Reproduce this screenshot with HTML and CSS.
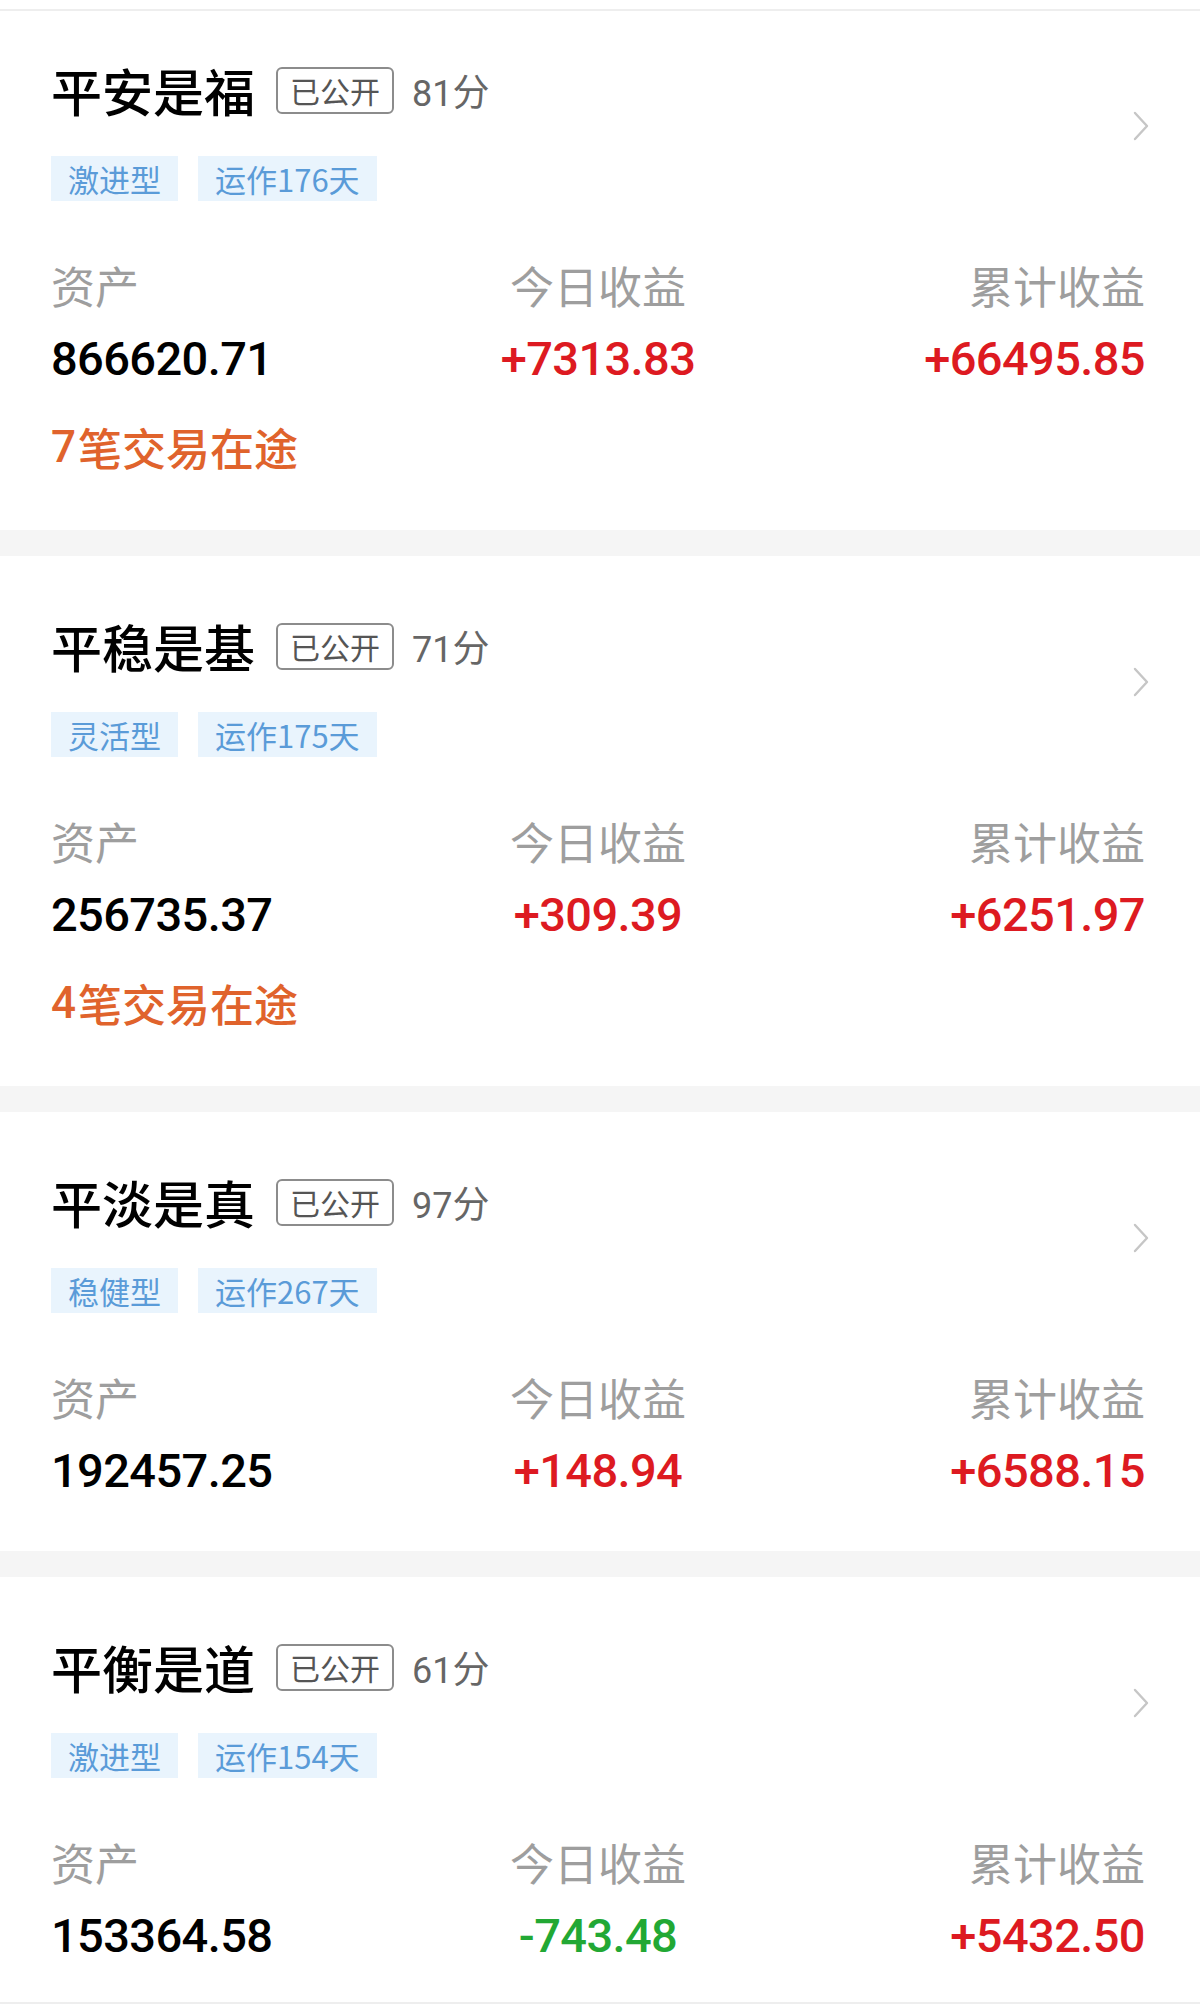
FILE: index.html
```html
<!DOCTYPE html>
<html lang="zh-CN">
<head>
    <meta charset="UTF-8">
    <meta name="viewport" content="width=device-width, initial-scale=1.0">
    <title>组合列表</title>
    <link rel="stylesheet" href="styles.css">
</head>
<body>
    <div class="divider"></div>
    <div class="list">
        <div class="card card-first">
            <div class="head">
                <div class="info">
                    <div class="title-row">
                        <span class="title">平安是福</span>
                        <span class="badge">已公开</span>
                        <span class="score">81<span class="unit">分</span></span>
                    </div>
                    <div class="tags">
                        <span class="tag">激进型</span>
                        <span class="tag">运作176天</span>
                    </div>
                </div>
                <svg class="chevron" viewBox="0 0 16 30"><path d="M2 2 L14 15 L2 28"/></svg>
            </div>
            <div class="stats">
                <div class="stat">
                    <div class="label">资产</div>
                    <div class="value">866620.71</div>
                </div>
                <div class="stat stat-center">
                    <div class="label">今日收益</div>
                    <div class="value up">+7313.83</div>
                </div>
                <div class="stat stat-right">
                    <div class="label">累计收益</div>
                    <div class="value up">+66495.85</div>
                </div>
            </div>
            <div class="pending"><span class="count">7</span>笔交易在途</div>
        </div>

        <div class="card">
            <div class="head">
                <div class="info">
                    <div class="title-row">
                        <span class="title">平稳是基</span>
                        <span class="badge">已公开</span>
                        <span class="score">71<span class="unit">分</span></span>
                    </div>
                    <div class="tags">
                        <span class="tag">灵活型</span>
                        <span class="tag">运作175天</span>
                    </div>
                </div>
                <svg class="chevron" viewBox="0 0 16 30"><path d="M2 2 L14 15 L2 28"/></svg>
            </div>
            <div class="stats">
                <div class="stat">
                    <div class="label">资产</div>
                    <div class="value">256735.37</div>
                </div>
                <div class="stat stat-center">
                    <div class="label">今日收益</div>
                    <div class="value up">+309.39</div>
                </div>
                <div class="stat stat-right">
                    <div class="label">累计收益</div>
                    <div class="value up">+6251.97</div>
                </div>
            </div>
            <div class="pending"><span class="count">4</span>笔交易在途</div>
        </div>

        <div class="card">
            <div class="head">
                <div class="info">
                    <div class="title-row">
                        <span class="title">平淡是真</span>
                        <span class="badge">已公开</span>
                        <span class="score">97<span class="unit">分</span></span>
                    </div>
                    <div class="tags">
                        <span class="tag">稳健型</span>
                        <span class="tag">运作267天</span>
                    </div>
                </div>
                <svg class="chevron" viewBox="0 0 16 30"><path d="M2 2 L14 15 L2 28"/></svg>
            </div>
            <div class="stats">
                <div class="stat">
                    <div class="label">资产</div>
                    <div class="value">192457.25</div>
                </div>
                <div class="stat stat-center">
                    <div class="label">今日收益</div>
                    <div class="value up">+148.94</div>
                </div>
                <div class="stat stat-right">
                    <div class="label">累计收益</div>
                    <div class="value up">+6588.15</div>
                </div>
            </div>
        </div>

        <div class="card card-last">
            <div class="head">
                <div class="info">
                    <div class="title-row">
                        <span class="title">平衡是道</span>
                        <span class="badge">已公开</span>
                        <span class="score">61<span class="unit">分</span></span>
                    </div>
                    <div class="tags">
                        <span class="tag">激进型</span>
                        <span class="tag">运作154天</span>
                    </div>
                </div>
                <svg class="chevron" viewBox="0 0 16 30"><path d="M2 2 L14 15 L2 28"/></svg>
            </div>
            <div class="stats">
                <div class="stat">
                    <div class="label">资产</div>
                    <div class="value">153364.58</div>
                </div>
                <div class="stat stat-center">
                    <div class="label">今日收益</div>
                    <div class="value down">-743.48</div>
                </div>
                <div class="stat stat-right">
                    <div class="label">累计收益</div>
                    <div class="value up">+5432.50</div>
                </div>
            </div>
        </div>
    </div>
    <div class="bottom-line"></div>
</body>
</html>
```

FILE: styles.css
```css
:root {
    --text: #111;
    --label: #9e9e9e;
    --band: #f5f5f5;
    --line: #eeeeee;
    --up: #dd1a21;
    --down: #22a834;
    --pending: #e0632c;
    --tag-bg: #e9f4fd;
    --tag-text: #5a9bd8;
    --num: Roboto, "Noto Sans CJK SC", sans-serif;
}

* {
    margin: 0;
    padding: 0;
    box-sizing: border-box;
}

body {
    background: #fff;
    color: var(--text);
    font-family: "Noto Sans CJK SC", "Noto Sans", sans-serif;
}

.divider {
    height: 11px;
    background: #fff;
    border-bottom: 2px solid var(--line);
}

.list {
    display: flex;
    flex-direction: column;
    gap: 26px;
    background: var(--band);
}

.card {
    background: #fff;
    padding: 55px 55px 55px 51px;
}

.card-first {
    padding-top: 44px;
}

.card-last {
    padding-bottom: 41px;
}

.head {
    display: flex;
    justify-content: space-between;
    align-items: center;
}

.title-row {
    display: flex;
    align-items: center;
    height: 70px;
}

.title {
    font-size: 51px;
    font-weight: 500;
    color: #000;
    line-height: 1;
}

.badge {
    margin-left: 21px;
    height: 47px;
    padding: 0 12px;
    border: 2px solid #8c8c8c;
    border-radius: 6px;
    font-size: 30px;
    line-height: 43px;
    color: #555;
}

.score {
    margin-left: 18px;
    font-family: var(--num);
    font-size: 36px;
    color: #666;
}

.score .unit {
    font-family: "Noto Sans CJK SC", sans-serif;
    font-size: 37px;
}

.tags {
    display: flex;
    gap: 20px;
    margin-top: 31px;
}

.tag {
    height: 45px;
    padding: 0 17px;
    background: var(--tag-bg);
    color: var(--tag-text);
    font-size: 31px;
    line-height: 45px;
}

.chevron {
    width: 16px;
    height: 30px;
    margin-right: -4px;
    margin-top: -4px;
    fill: none;
    stroke: #c6c6c6;
    stroke-width: 2.4;
    stroke-linecap: round;
    stroke-linejoin: round;
}

.stats {
    display: grid;
    grid-template-columns: 1fr 1fr 1fr;
    margin-top: 59px;
}

.stat-center {
    text-align: center;
}

.stat-right {
    text-align: right;
}

.label {
    font-size: 44px;
    line-height: 50px;
    color: var(--label);
}

.value {
    margin-top: 24px;
    font-family: var(--num);
    font-size: 47px;
    font-weight: 500;
    line-height: 50px;
    letter-spacing: -0.6px;
    color: #000;
}

.value.up {
    color: var(--up);
}

.value.down {
    color: var(--down);
}

.pending {
    display: flex;
    align-items: center;
    height: 50px;
    margin-top: 38px;
    margin-bottom: 3px;
    font-size: 44px;
    font-weight: 500;
    line-height: 1;
    color: var(--pending);
}

.pending .count {
    font-family: var(--num);
    margin-right: 2px;
}

.bottom-line {
    height: 9px;
    border-top: 2px solid var(--line);
    background: #fff;
}
```
